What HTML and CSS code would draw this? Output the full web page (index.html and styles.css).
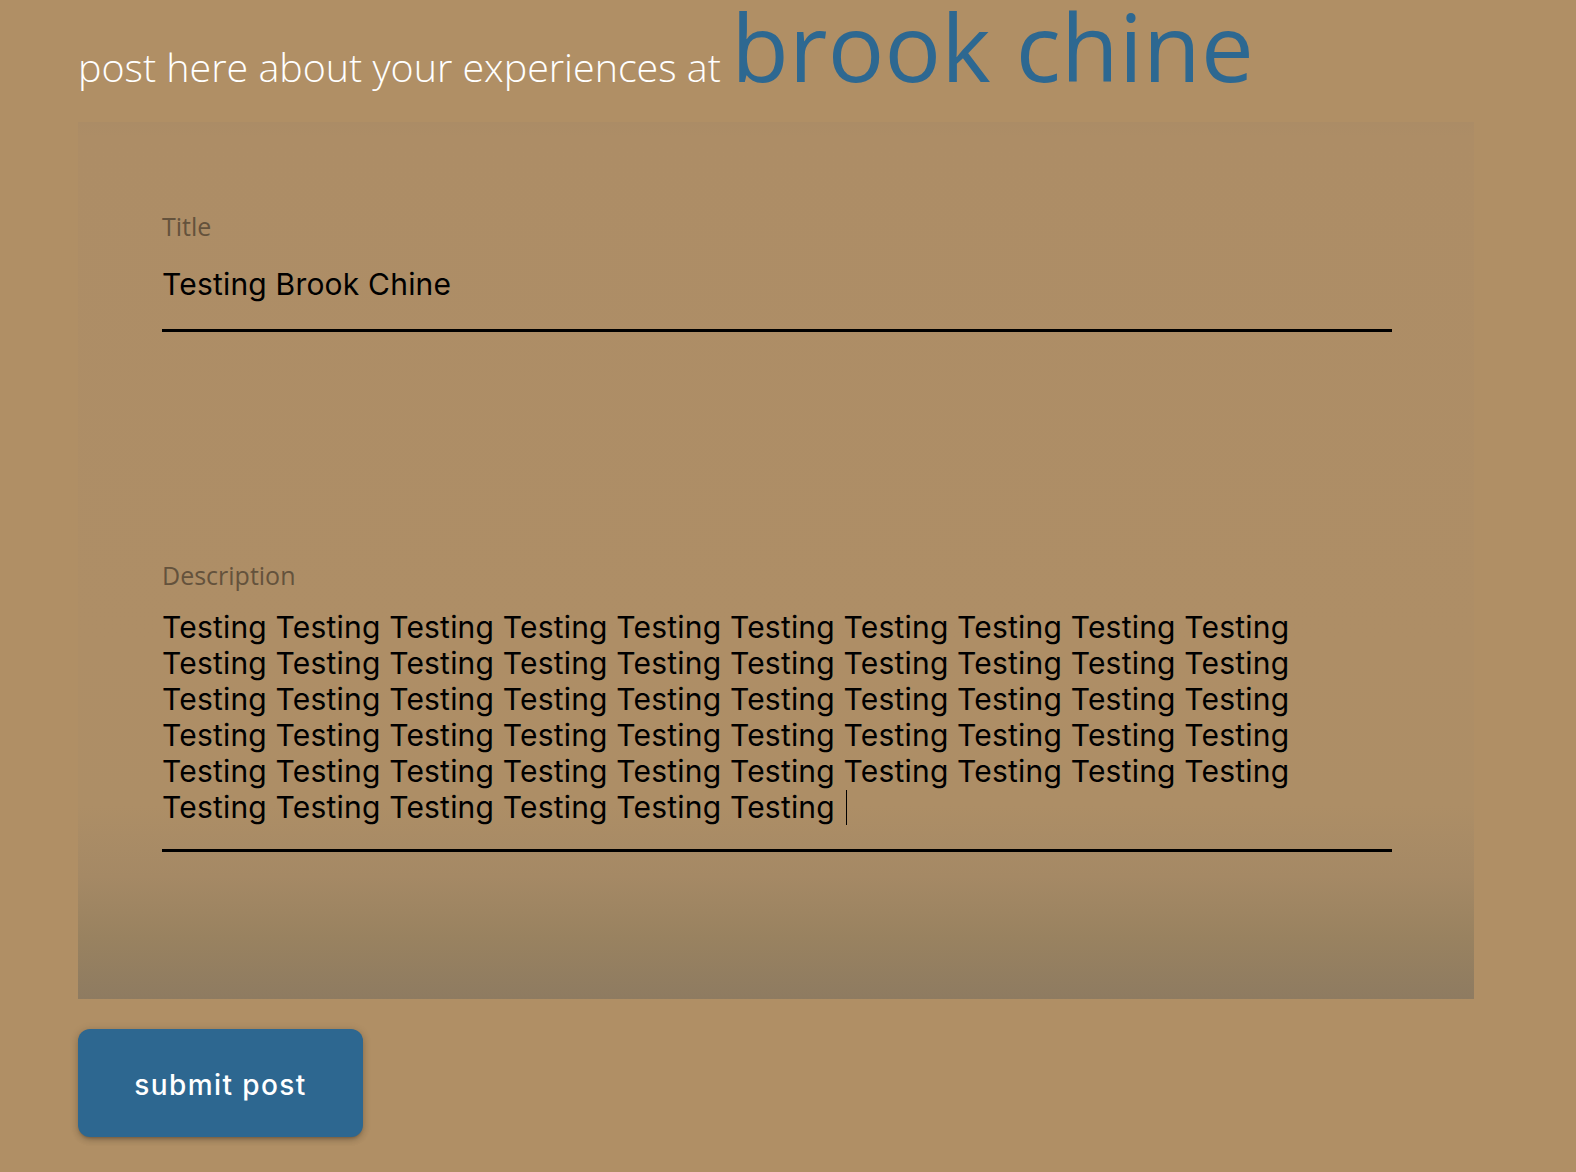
FILE: index.html
```html
<!DOCTYPE html>
<html lang="en">
<head>
<meta charset="utf-8">
<title>post here about your experiences at brook chine</title>
<link rel="stylesheet" href="styles.css">
</head>
<body>
<main class="page">
  <h1 class="headline"><span class="lead">post here about your experiences at </span><span class="brand">brook chine</span></h1>
  <form class="post-form">
    <div class="panel">
      <div class="field field-title">
        <label class="field-label" for="title">Title</label>
        <input class="field-input" id="title" type="text" value="Testing Brook Chine">
      </div>
      <div class="field field-desc">
        <label class="field-label">Description</label>
        <div class="field-input multiline">Testing Testing Testing Testing Testing Testing Testing Testing Testing Testing Testing Testing Testing Testing Testing Testing Testing Testing Testing Testing Testing Testing Testing Testing Testing Testing Testing Testing Testing Testing Testing Testing Testing Testing Testing Testing Testing Testing Testing Testing Testing Testing Testing Testing Testing Testing Testing Testing Testing Testing Testing Testing Testing Testing Testing Testing <span class="caret"></span></div>
      </div>
    </div>
    <button class="submit" type="button">submit post</button>
  </form>
</main>
</body>
</html>
```

FILE: styles.css
```css
* { box-sizing: border-box; }

html, body {
  margin: 0;
  padding: 0;
  background: #b08f65;
}

.page {
  padding: 0 0 40px 78px;
  width: 1474px;
}

.headline {
  margin: 0;
  font-family: "Open Sans", "DejaVu Sans", sans-serif;
  font-weight: 400;
  font-size: 94px;
  line-height: 92px;
  white-space: nowrap;
}

.lead {
  font-size: 39.4px;
  font-weight: 300;
  line-height: 1;
  color: #ffffff;
}

.brand {
  color: #2d6891;
  letter-spacing: 0.3px;
}

.post-form {
  display: flex;
  flex-direction: column;
  align-items: flex-start;
}

.panel {
  margin-top: 30px;
  width: 1396px;
  padding: 89px 82px 147px 84px;
  background: linear-gradient(to bottom,
    #ab8c66 0px,
    #ad8d66 14px,
    #ae8e66 60%,
    #ad8e66 78%,
    #a58965 86%,
    #998260 93%,
    #8e7b61 100%);
}

.field {
  display: flex;
  flex-direction: column;
}

.field-desc {
  margin-top: 228px;
}

.field-label {
  font-family: "Open Sans", "DejaVu Sans", sans-serif;
  font-size: 25px;
  line-height: 30px;
  color: #64523c;
}

.field-input {
  display: block;
  width: 100%;
  margin: 25px 0 0;
  padding: 0 0 27px;
  border: none;
  border-bottom: 3px solid #000;
  background: transparent;
  font-family: Inter, "Liberation Sans", sans-serif;
  font-size: 30px;
  letter-spacing: 0.2px;
  line-height: 36px;
  height: 66px;
  color: #000;
  outline: none;
}

.multiline {
  height: auto;
  margin-top: 19px;
  padding-bottom: 24px;
}

.caret {
  display: inline-block;
  width: 1px;
  height: 35px;
  background: #000;
  vertical-align: -7px;
  margin-left: 2px;
}

.submit {
  margin-top: 30px;
  width: 285px;
  height: 108px;
  padding: 4px 0 0;
  border: none;
  border-radius: 12px;
  background: #2d6790;
  color: #ffffff;
  font-family: Inter, "Liberation Sans", sans-serif;
  font-weight: 500;
  font-size: 28px;
  letter-spacing: 1.4px;
  box-shadow: 0 3px 3px -2px rgba(0,0,0,0.2), 0 3px 6px 0 rgba(0,0,0,0.16), 0 1px 10px 0 rgba(0,0,0,0.12);
  cursor: pointer;
}
```
